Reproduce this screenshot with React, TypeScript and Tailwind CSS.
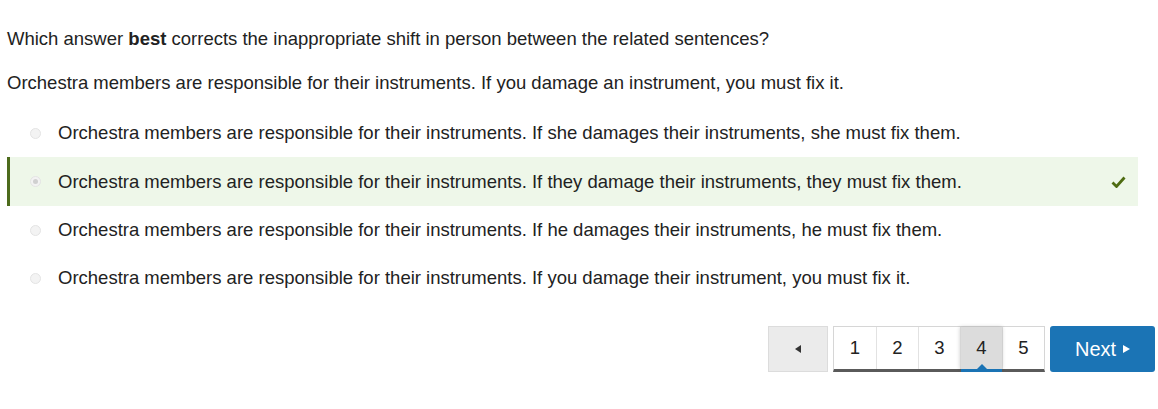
import React from "react";

const options = [
  "Orchestra members are responsible for their instruments. If she damages their instruments, she must fix them.",
  "Orchestra members are responsible for their instruments. If they damage their instruments, they must fix them.",
  "Orchestra members are responsible for their instruments. If he damages their instruments, he must fix them.",
  "Orchestra members are responsible for their instruments. If you damage their instrument, you must fix it.",
];

function Radio({ checked }: { checked: boolean }) {
  return (
    <span className="w-[11px] h-[11px] rounded-full border border-[#e4e4e4] bg-[#f3f3f3] flex items-center justify-center">
      {checked && <span className="w-[5px] h-[5px] rounded-full bg-[#d0d0d0]" />}
    </span>
  );
}

export default function App() {
  return (
    <div className="w-[1158px] h-[409px] bg-white text-[#222] font-['Liberation_Sans',Arial,sans-serif] text-[18.5px] relative">
      <div className="pl-[7px] pt-[28px] leading-[22px]">
        Which answer <b>best</b> corrects the inappropriate shift in person between the related sentences?
      </div>
      <div className="pl-[7px] pt-[22px] leading-[22px]">
        Orchestra members are responsible for their instruments. If you damage an instrument, you must fix it.
      </div>
      <div className="mt-[15px] ml-[7px] w-[1131px] flex flex-col">
        {options.map((t, i) => {
          const sel = i === 1;
          return (
            <div
              key={i}
              className={
                sel
                  ? "h-[49px] flex items-center border-l-[3px] border-[#4d6b1c] bg-[#eef7e9] pl-[20px] pr-[12px]"
                  : "h-[48px] flex items-center border-l-[3px] border-transparent pl-[20px] pr-[12px]"
              }
            >
              <Radio checked={sel} />
              <span className="ml-[17px] flex-1 leading-[22px]">{t}</span>
              {sel && (
                <svg width="15" height="12" viewBox="0 0 15 12">
                  <path d="M1.5 6.5 L5.5 10.5 L13.5 1.5" fill="none" stroke="#4e6c12" strokeWidth="2.8" />
                </svg>
              )}
            </div>
          );
        })}
      </div>
      <div className="mt-[24px] pr-[3px] flex justify-end items-start gap-[5px]">
        <button className="w-[60px] h-[46px] bg-[#ebebeb] border border-[#dcdcdc] flex items-center justify-center">
          <svg width="7" height="8" viewBox="0 0 7 8">
            <path d="M6 0 L0 4 L6 8 Z" fill="#333" />
          </svg>
        </button>
        <div className="flex h-[46px] border border-[#d6d6d6] border-b-[3px] border-b-[#5a5a5a]">
          {[1, 2, 3, 4, 5].map((n) => (
            <div
              key={n}
              className={
                n === 4
                  ? "relative w-[42px] h-full flex items-center justify-center bg-[#dcdcdc] border-l border-[#d6d6d6] shadow-[0_0_4px_rgba(0,0,0,0.2)]"
                  : "w-[42px] h-full flex items-center justify-center bg-white border-l border-[#e2e2e2] first:border-l-0"
              }
            >
              {n}
              {n === 4 && (
                <>
                  <span className="absolute left-0 right-0 bottom-[-3px] h-[3px] bg-[#1a73b4]" />
                  <span className="absolute left-1/2 -translate-x-1/2 bottom-0 w-0 h-0 border-l-[5px] border-r-[5px] border-b-[5px] border-l-transparent border-r-transparent border-b-[#1a73b4]" />
                </>
              )}
            </div>
          ))}
        </div>
        <button className="w-[105px] h-[46px] rounded-[3px] bg-[#1b74b5] text-white text-[20px] flex items-center justify-center gap-[7px]">
          Next
          <svg width="7" height="8" viewBox="0 0 7 8">
            <path d="M0 0 L7 4 L0 8 Z" fill="#fff" />
          </svg>
        </button>
      </div>
    </div>
  );
}
